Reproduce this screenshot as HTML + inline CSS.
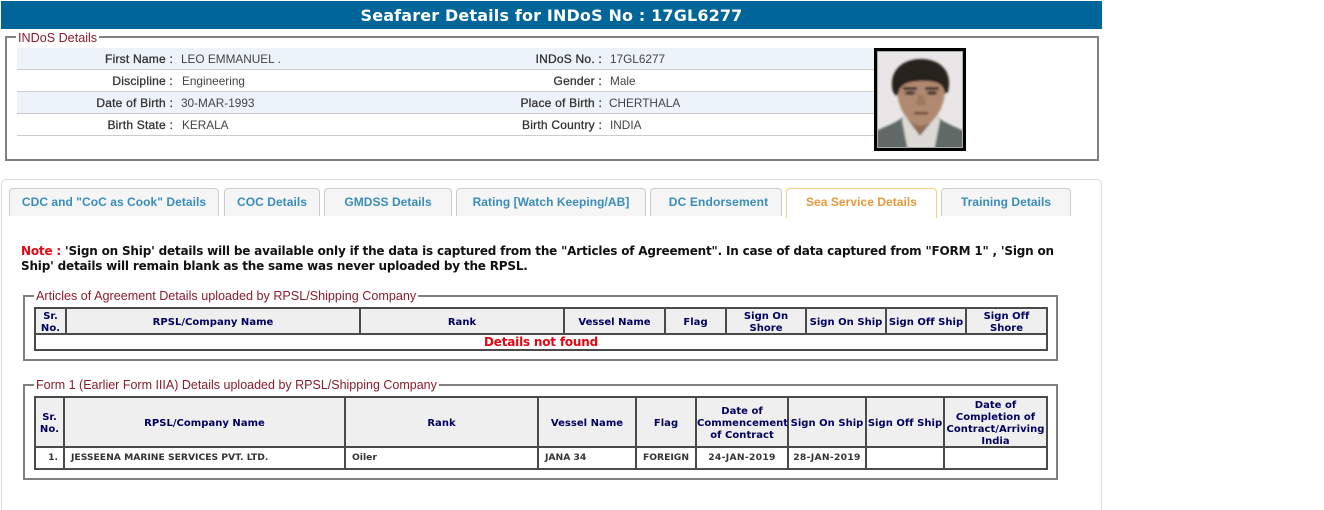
<!DOCTYPE html>
<html lang="en">
<head>
<meta charset="utf-8">
<title>Seafarer Details</title>
<style>
html,body{margin:0;padding:0;background:#fff;width:1324px;height:510px;overflow:hidden}
body{position:relative;font-family:"Liberation Sans",sans-serif}
.abs,.abs *{box-sizing:border-box}
.abs{position:absolute}
.title{left:1px;top:1px;width:1101px;height:28px;background:#006699;color:#fff;text-align:center;font:bold 16px/29px "DejaVu Sans",sans-serif;letter-spacing:.15px}
.fs{border:2px solid #808080}
.lg{position:absolute;background:#fff;color:#8a1c2e;font:12.6px/14px "Liberation Sans",sans-serif;padding:0 2px;white-space:nowrap}
.row{left:17px;width:857px;height:22px;border-bottom:1px solid #ccc}
.row.b{background:#edf3fb}
.l,.v{position:absolute;top:0;font-size:12px;line-height:23px;white-space:nowrap}
.l{color:#333;text-align:right;font-weight:normal;-webkit-text-stroke:.3px #333;letter-spacing:.22px}
.v{color:#444;font-size:11.8px}
.tab{top:188px;height:28px;border:1px solid #ccc;border-bottom:0;border-radius:4px 4px 0 0;background:#f5f5f5;color:#3a8dbb;text-align:center;font:bold 12px/26px "Liberation Sans",sans-serif;white-space:nowrap;letter-spacing:.05px}
.tab.on{background:#fff;border-color:#f0d27a;color:#e8983a;height:30px}
.note{left:21px;top:244px;width:1050px;font:bold 12px/15px "DejaVu Sans",sans-serif;color:#111;letter-spacing:-.19px;white-space:nowrap}
.note b{color:#e30613}
table{position:absolute;border-collapse:collapse;table-layout:fixed;font-family:"DejaVu Sans",sans-serif;background:#fff}
td,th{border:2px solid #4a4a4a;padding:0;text-align:center;vertical-align:middle}
th{background:#efefef;color:#000060;font-size:10px;line-height:12px;font-weight:bold;letter-spacing:.03px}
th div{position:relative;top:2px}
td{font-size:9.2px;font-weight:bold;color:#333;line-height:12px}
.nf{color:#e30613;font-size:12px;line-height:14px;letter-spacing:-.2px}
.d{letter-spacing:.3px}
</style>
</head>
<body>
<div class="abs title">Seafarer Details for INDoS No : 17GL6277</div>

<div class="abs fs" style="left:5px;top:36px;width:1094px;height:125px"></div>
<div class="lg" style="left:16px;top:31px">INDoS Details</div>

<div class="abs row b" style="top:48px"><span class="l" style="left:0;width:156px">First Name :</span><span class="v" style="left:164px">LEO EMMANUEL .</span><span class="l" style="left:399px;width:186px">INDoS No. :</span><span class="v" style="left:593px">17GL6277</span></div>
<div class="abs row" style="top:70px"><span class="l" style="left:0;width:156px">Discipline :</span><span class="v" style="left:165px">Engineering</span><span class="l" style="left:399px;width:186px">Gender :</span><span class="v" style="left:593px">Male</span></div>
<div class="abs row b" style="top:92px"><span class="l" style="left:0;width:156px">Date of Birth :</span><span class="v" style="left:164px">30-MAR-1993</span><span class="l" style="left:399px;width:186px">Place of Birth :</span><span class="v" style="left:592px">CHERTHALA</span></div>
<div class="abs row" style="top:114px"><span class="l" style="left:0;width:156px">Birth State :</span><span class="v" style="left:165px">KERALA</span><span class="l" style="left:399px;width:186px">Birth Country :</span><span class="v" style="left:593px">INDIA</span></div>

<svg class="abs" style="left:874px;top:48px" width="92" height="103" viewBox="0 0 92 103" aria-hidden="true">
<defs>
<filter id="s" x="-10%" y="-10%" width="120%" height="120%"><feGaussianBlur stdDeviation="1"/></filter>
<clipPath id="c"><rect x="4" y="4" width="84" height="95"/></clipPath>
</defs>
<rect x="0" y="0" width="92" height="103" fill="#000"/>
<rect x="3" y="3" width="86" height="97" fill="#a8a8a8"/>
<g clip-path="url(#c)">
<rect x="4" y="4" width="84" height="95" fill="#e8e6e7"/>
<g filter="url(#s)">
<path d="M0 103 L0 84 C12 78 22 75 29 69 L40 103Z" fill="#5f6a66"/>
<path d="M92 103 L92 84 C80 78 70 75 64 69 L52 103Z" fill="#5f6a66"/>
<path d="M28 72 L33 64 L60 64 L66 72 L60 103 L34 103Z" fill="#dcdad6"/>
<path d="M33 58 L34 72 L46 88 L59 72 L60 58Z" fill="#8f6a56"/>
<path d="M23 38 C22 60 35 78 47 78 C59 78 72 60 71 38 C67 24 27 24 23 38Z" fill="#b08970"/>
<path d="M19 44 C14 24 27 11 47 11 C67 11 79 24 74 44 L71 46 C70 38 66 33 50 33 C34 33 26 36 24 46 L22 48Z" fill="#25211f"/>
<rect x="29" y="39" width="14" height="3" fill="#3c2e28"/>
<rect x="51" y="39" width="14" height="3" fill="#3c2e28"/>
<ellipse cx="36" cy="45" rx="5.5" ry="2" fill="#4a3a34"/>
<ellipse cx="58" cy="45" rx="5.5" ry="2" fill="#4a3a34"/>
<path d="M44 47 L42 57 L52 57 L50 47Z" fill="#9c7860"/>
<rect x="40" y="64" width="14" height="2.5" fill="#6e453a"/>
</g>
</g>
</svg>

<div class="abs" style="left:1px;top:179px;width:1101px;height:340px;border:1px solid #ddd;border-radius:5px"></div>

<div class="abs tab" style="left:9px;width:210px">CDC and "CoC as Cook" Details</div>
<div class="abs tab" style="left:224px;width:96px">COC Details</div>
<div class="abs tab" style="left:324px;width:128px">GMDSS Details</div>
<div class="abs tab" style="left:456px;width:190px">Rating [Watch Keeping/AB]</div>
<div class="abs tab" style="left:650px;width:132px;padding-left:5px;letter-spacing:.15px">DC Endorsement</div>
<div class="abs tab on" style="left:786px;width:151px">Sea Service Details</div>
<div class="abs tab" style="left:941px;width:130px">Training Details</div>

<div class="abs note"><b>Note :</b> 'Sign on Ship' details will be available only if the data is captured from the "Articles of Agreement". In case of data captured from "FORM 1" , 'Sign on<br>Ship' details will remain blank as the same was never uploaded by the RPSL.</div>

<div class="abs fs" style="left:23px;top:295px;width:1035px;height:66px"></div>
<div class="lg" style="left:34px;top:289px">Articles of Agreement Details uploaded by RPSL/Shipping Company</div>
<table style="left:34px;top:307px;width:1012px">
<colgroup><col style="width:31px"><col style="width:294px"><col style="width:204px"><col style="width:101px"><col style="width:61px"><col style="width:80px"><col style="width:80px"><col style="width:80px"><col style="width:81px"></colgroup>
<tr style="height:26px"><th><div>Sr.<br>No.</div></th><th><div>RPSL/Company Name</div></th><th><div>Rank</div></th><th><div>Vessel Name</div></th><th><div>Flag</div></th><th><div>Sign On<br>Shore</div></th><th><div>Sign On Ship</div></th><th><div>Sign Off Ship</div></th><th><div>Sign Off<br>Shore</div></th></tr>
<tr style="height:16px"><td colspan="9" class="nf">Details not found</td></tr>
</table>

<div class="abs fs" style="left:23px;top:384px;width:1035px;height:96px"></div>
<div class="lg" style="left:34px;top:378px;font-size:12.5px">Form 1 (Earlier Form IIIA) Details uploaded by RPSL/Shipping Company</div>
<table style="left:34px;top:396px;width:1012px">
<colgroup><col style="width:29px"><col style="width:281px"><col style="width:193px"><col style="width:98px"><col style="width:60px"><col style="width:92px"><col style="width:78px"><col style="width:78px"><col style="width:103px"></colgroup>
<tr style="height:50px"><th><div>Sr.<br>No.</div></th><th><div>RPSL/Company Name</div></th><th><div>Rank</div></th><th><div>Vessel Name</div></th><th><div>Flag</div></th><th><div>Date of<br>Commencement<br>of Contract</div></th><th><div>Sign On Ship</div></th><th><div>Sign Off Ship</div></th><th><div>Date of<br>Completion of<br>Contract/Arriving<br>India</div></th></tr>
<tr style="height:22px"><td style="text-align:right;padding-right:5px">1.</td><td style="text-align:left;padding-left:6px">JESSEENA MARINE SERVICES PVT. LTD.</td><td style="text-align:left;padding-left:6px">Oiler</td><td style="text-align:left;padding-left:6px">JANA 34</td><td>FOREIGN</td><td class="d">24-JAN-2019</td><td class="d">28-JAN-2019</td><td></td><td></td></tr>
</table>
</body>
</html>
